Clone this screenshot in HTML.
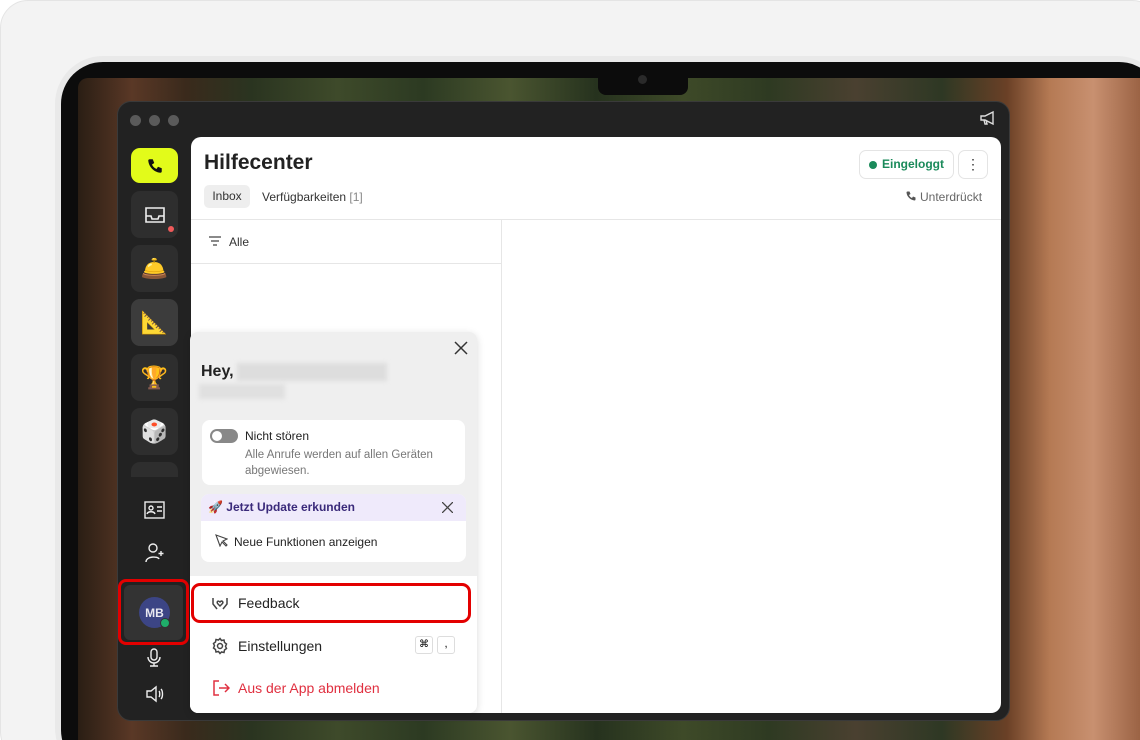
<!DOCTYPE html>
<html><head><meta charset="utf-8"><style>
*{box-sizing:border-box;margin:0;padding:0}
html,body{width:1140px;height:740px;overflow:hidden}
body{background:#fff;font-family:"Liberation Sans",sans-serif;position:relative}
#wrap{position:absolute;left:0;top:0;width:1140px;height:740px;overflow:hidden}
.outer{position:absolute;left:0;top:0;width:1160px;height:760px;background:#f3f3f3;border:1px solid #e4e4e4;border-radius:28px}
.bezel{position:absolute;left:55px;top:56px;width:1110px;height:720px;background:#e9e9e9;border-radius:48px}
.bezel2{position:absolute;left:61px;top:62px;width:1100px;height:710px;background:#0c0c0c;border-radius:42px}
.screen{position:absolute;left:78px;top:78px;width:1080px;height:680px;overflow:hidden;border-radius:10px 0 0 0;
background:linear-gradient(90deg,#2a1e14 0%,#5a3826 5%,#3a2a1c 10%,#2a3420 16%,#3e4a2a 24%,#2c3a22 32%,#4a5530 40%,#26321e 48%,#3e4a28 56%,#2e3a22 64%,#4a4030 72%,#2e3824 80%,#6a4026 86%,#b57a54 90%,#c89070 94%,#8a5234 100%)}
.notch{position:absolute;left:598px;top:78px;width:90px;height:17px;background:#0c0c0c;border-radius:0 0 8px 8px}
.cam{position:absolute;left:638px;top:75px;width:9px;height:9px;border-radius:50%;background:#2a2a2a}
.win{position:absolute;left:117px;top:101px;width:893px;height:620px;background:#222;border-radius:14px;border:1px solid #3a3a3a}
.dot{position:absolute;top:115px;width:11px;height:11px;border-radius:50%;background:#5a5a5a}
.sb{position:absolute;left:131px;width:47px;height:47px;border-radius:9px;background:#2e2e2e;display:flex;align-items:center;justify-content:center;font-size:22px}
.main{position:absolute;left:191px;top:137px;width:810px;height:576px;background:#fff;border-radius:10px;overflow:hidden}
.pop{position:absolute;left:190px;top:332px;width:287px;height:381px;background:#efefef;border-radius:8px;box-shadow:0 2px 8px rgba(0,0,0,.15);overflow:hidden}
.card{position:absolute;background:#fff;border-radius:8px}
.ic{stroke:#444;fill:none;stroke-width:1.5}
</style></head><body><div id="wrap">
<div class="outer"></div><div class="bezel"></div><div class="bezel2"></div>
<div class="screen"></div><div class="notch"></div><div class="cam"></div>
<div class="win"></div>
<div class="dot" style="left:130px"></div><div class="dot" style="left:149px"></div><div class="dot" style="left:168px"></div>
<svg style="position:absolute;left:979px;top:109px" width="18" height="18" viewBox="0 0 18 18" fill="none" stroke="#ddd" stroke-width="1.4"><path d="M2 7h4l8-4v12l-8-4H2z M5 11l1 4h2l-1-4"/></svg>
<div class="sb" style="top:148px;height:35px;background:#e2fb1a"><svg width="18" height="18" viewBox="0 0 24 24"><path d="M5 3h4l2 5-3 2a11 11 0 0 0 6 6l2-3 5 2v4a2 2 0 0 1-2 2A18 18 0 0 1 3 5a2 2 0 0 1 2-2z" fill="#111"/></svg></div>
<div class="sb" style="top:191px"><svg width="24" height="20" viewBox="0 0 24 20" fill="none" stroke="#eee" stroke-width="1.6"><path d="M3 3h18v14H3z M3 11h5l1 3h6l1-3h5"/></svg><div style="position:absolute;left:37px;top:35px;width:6px;height:6px;border-radius:50%;background:#f05a5a"></div></div>
<div class="sb" style="top:245px">🛎️</div>
<div class="sb" style="top:299px;background:#3c3c3c">📐</div>
<div class="sb" style="top:354px">🏆</div>
<div class="sb" style="top:408px">🎲</div>
<div class="sb" style="top:462px;height:15px;border-radius:9px 9px 0 0"></div>
<div style="position:absolute;left:121px;top:477px;width:66px;height:238px;background:#222"></div>
<svg style="position:absolute;left:144px;top:501px" width="21" height="18" viewBox="0 0 21 18" fill="none" stroke="#eee" stroke-width="1.4"><rect x="1" y="1" width="19" height="16"/><circle cx="7" cy="7" r="2"/><path d="M3 13c1-3 7-3 8 0M13 6h5M13 10h5"/></svg>
<svg style="position:absolute;left:144px;top:542px" width="22" height="22" viewBox="0 0 22 22" fill="none" stroke="#eee" stroke-width="1.4"><circle cx="9" cy="6" r="4"/><path d="M2 20c0-6 12-6 13-3M17 9v5M14.5 11.5h5"/></svg>
<div style="position:absolute;left:124px;top:585px;width:59px;height:55px;background:#333;border-radius:6px"></div>
<div style="position:absolute;left:118px;top:579px;width:71px;height:66px;border:3px solid #e30000;border-radius:8px"></div>
<div style="position:absolute;left:139px;top:597px;width:31px;height:31px;border-radius:50%;background:#3c4585;color:#e8e8f0;font-size:12px;font-weight:bold;display:flex;align-items:center;justify-content:center">MB</div>
<div style="position:absolute;left:160px;top:618px;width:10px;height:10px;border-radius:50%;background:#1fae6a;border:1px solid #333"></div>
<svg style="position:absolute;left:146px;top:648px" width="16" height="20" viewBox="0 0 16 20" fill="none" stroke="#eee" stroke-width="1.4"><rect x="5" y="1" width="6" height="11" rx="3"/><path d="M2 9a6 6 0 0 0 12 0M8 15v3M4 18h8"/></svg>
<svg style="position:absolute;left:145px;top:685px" width="20" height="18" viewBox="0 0 20 18" fill="none" stroke="#eee" stroke-width="1.4"><path d="M2 6h4l5-4v14l-5-4H2z M14 6c1 1 1 5 0 6M16 4c2 2 2 8 0 10"/></svg>

<div class="main">
 <div style="position:absolute;left:13px;top:14px;font-size:21px;font-weight:bold;color:#222">Hilfecenter</div>
 <div style="position:absolute;left:13px;top:48px;width:46px;height:23px;background:#eee;border-radius:5px;font-size:12px;color:#333;text-align:center;line-height:23px">Inbox</div>
 <div style="position:absolute;left:71px;top:53px;font-size:12px;color:#333">Verfügbarkeiten <span style="color:#888">[1]</span></div>
 <div style="position:absolute;left:668px;top:13px;width:95px;height:29px;border:1px solid #e4e4e4;border-radius:7px;font-size:12px;font-weight:bold;color:#1a8a5a;line-height:27px;padding-left:22px">Eingeloggt<div style="position:absolute;left:9px;top:10px;width:8px;height:8px;border-radius:50%;background:#1a8a5a"></div></div>
 <div style="position:absolute;left:767px;top:13px;width:30px;height:29px;border:1px solid #e4e4e4;border-radius:7px;text-align:center;line-height:27px;font-size:14px;color:#333">⋮</div>
 <svg style="position:absolute;left:714px;top:53px" width="12" height="12" viewBox="0 0 24 24"><path d="M5 3h4l2 5-3 2a11 11 0 0 0 6 6l2-3 5 2v4a2 2 0 0 1-2 2A18 18 0 0 1 3 5a2 2 0 0 1 2-2z" fill="#555"/></svg>
 <div style="position:absolute;left:729px;top:53px;font-size:12px;color:#666">Unterdrückt</div>
 <div style="position:absolute;left:0;top:82px;width:810px;height:1px;background:#e6e6e6"></div>
 <div style="position:absolute;left:310px;top:83px;width:1px;height:500px;background:#e6e6e6"></div>
 <div style="position:absolute;left:0;top:126px;width:310px;height:1px;background:#e6e6e6"></div>
 <svg style="position:absolute;left:18px;top:99px" width="12" height="10" viewBox="0 0 12 10" stroke="#444" stroke-width="1.2"><path d="M0 1h12M2 5h8M4 9h4"/></svg>
 <div style="position:absolute;left:38px;top:98px;font-size:12px;color:#333">Alle</div>
</div>

<div class="pop">
 <svg style="position:absolute;left:264px;top:9px" width="14" height="14" viewBox="0 0 14 14" stroke="#333" stroke-width="1.5"><path d="M1 1l12 12M13 1L1 13"/></svg>
 <div style="position:absolute;left:11px;top:31px;font-size:16px;font-weight:bold;color:#222">Hey,</div>
 <div style="position:absolute;left:47px;top:31px;width:150px;height:18px;background:#ddd;filter:blur(2px)"></div>
 <div style="position:absolute;left:9px;top:52px;width:86px;height:15px;background:#e0e0e0;filter:blur(2px)"></div>
 <div class="card" style="left:12px;top:88px;width:263px;height:65px">
  <div style="position:absolute;left:8px;top:9px;width:28px;height:14px;border-radius:7px;background:#888"><div style="position:absolute;left:2px;top:2px;width:10px;height:10px;border-radius:50%;background:#fff"></div></div>
  <div style="position:absolute;left:43px;top:9px;font-size:12px;color:#222">Nicht stören</div>
  <div style="position:absolute;left:43px;top:27px;font-size:11.5px;color:#777;line-height:16px;width:215px">Alle Anrufe werden auf allen Geräten abgewiesen.</div>
 </div>
 <div class="card" style="left:11px;top:162px;width:265px;height:68px;overflow:hidden">
  <div style="height:27px;background:#efeafb;font-size:12px;font-weight:bold;color:#3a2a7a;line-height:27px;padding-left:7px">🚀 Jetzt Update erkunden</div>
  <svg style="position:absolute;left:241px;top:8px" width="11" height="11" viewBox="0 0 11 11" stroke="#444" stroke-width="1.3"><path d="M0 0l11 11M11 0L0 11"/></svg>
  <svg style="position:absolute;left:14px;top:40px" width="13" height="13" viewBox="0 0 13 13" fill="none" stroke="#444" stroke-width="1.1"><path d="M1 1l4 11 2-4 4 4 1-1-4-4 4-2z"/></svg>
  <div style="position:absolute;left:33px;top:41px;font-size:12px;color:#222">Neue Funktionen anzeigen</div>
 </div>
 <div style="position:absolute;left:0;top:244px;width:287px;height:140px;background:#fff"></div>
 <div style="position:absolute;left:1px;top:251px;width:280px;height:40px;border:3px solid #e30000;border-radius:9px"></div>
 <svg style="position:absolute;left:21px;top:262px" width="18" height="18" viewBox="0 0 18 18" class="ic"><path d="M9 8c-2-2-4 0-2 2l2 2 2-2c2-2 0-4-2-2zM2 4v6l4 5M16 4v6l-4 5"/></svg>
 <div style="position:absolute;left:48px;top:263px;font-size:14px;color:#222">Feedback</div>
 <svg style="position:absolute;left:21px;top:305px" width="18" height="18" viewBox="0 0 18 18" class="ic"><circle cx="9" cy="9" r="2.5"/><path d="M9 1.5l1.5 2 2.5-.5.5 2.5 2 1.5-1 2.3 1 2.2-2 1.5-.5 2.5-2.5-.5L9 16.5l-1.5-2-2.5.5-.5-2.5-2-1.5 1-2.2-1-2.3 2-1.5.5-2.5 2.5.5z"/></svg>
 <div style="position:absolute;left:48px;top:306px;font-size:14px;color:#222">Einstellungen</div>
 <div style="position:absolute;left:225px;top:304px;width:18px;height:18px;border:1px solid #ddd;border-radius:3px;font-size:10px;text-align:center;line-height:16px">⌘</div>
 <div style="position:absolute;left:247px;top:304px;width:18px;height:18px;border:1px solid #ddd;border-radius:3px;font-size:11px;text-align:center;line-height:14px">,</div>
 <svg style="position:absolute;left:22px;top:347px" width="18" height="18" viewBox="0 0 18 18" fill="none" stroke="#e03040" stroke-width="1.5"><path d="M7 2H2v14h5M7 9h10M13 5l4 4-4 4"/></svg>
 <div style="position:absolute;left:48px;top:348px;font-size:14px;color:#e03040">Aus der App abmelden</div>
</div>
</div></body></html>
